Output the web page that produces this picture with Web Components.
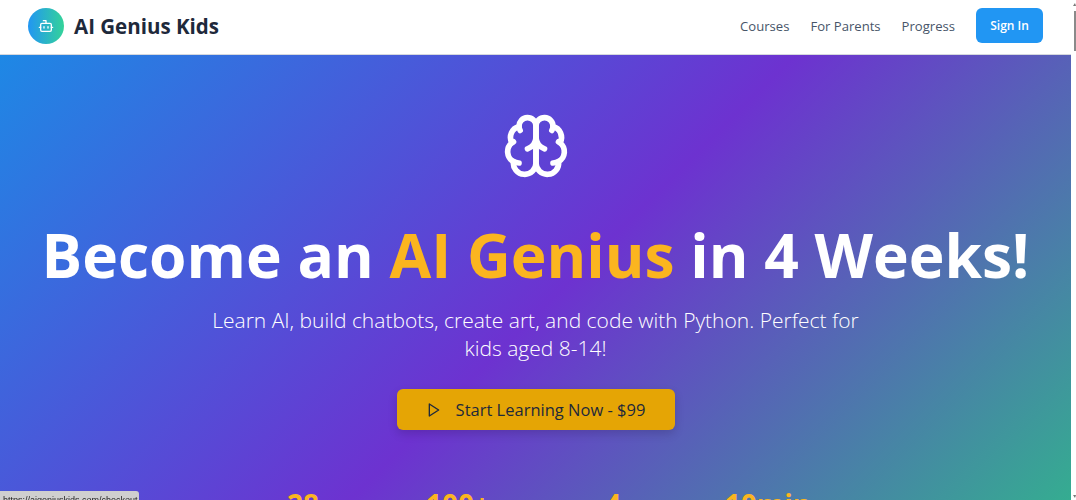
<!DOCTYPE html>
<html>
<head>
<meta charset="utf-8">
<title>AI Genius Kids</title>
<style>
    html, body { margin: 0; height: 100%; overflow: hidden; }
    body { font-family: "Open Sans", "Noto Sans", sans-serif; background: #fff; display: flex; }
    app-page { flex: 1; min-width: 0; }
</style>
</head>
<body>
<app-page>
    <top-nav></top-nav>
    <hero-section>
        <stat-item value="28"></stat-item>
        <stat-item value="100+"></stat-item>
        <stat-item value="4"></stat-item>
        <stat-item value="10min"></stat-item>
    </hero-section>
</app-page>
<fake-scrollbar></fake-scrollbar>
<status-tip>https://aigeniuskids.com/checkout</status-tip>

<script>
class AppPage extends HTMLElement {
    constructor() {
        super();
        this.attachShadow({ mode: 'open' });
        this.shadowRoot.innerHTML = `
            <style>
                :host { display: block; height: 500px; overflow: hidden; }
            </style>
            <slot></slot>
        `;
    }
}

class TopNav extends HTMLElement {
    constructor() {
        super();
        this.attachShadow({ mode: 'open' });
        this.shadowRoot.innerHTML = `
            <style>
                :host {
                    display: flex;
                    align-items: center;
                    justify-content: space-between;
                    height: 54px;
                    box-sizing: content-box;
                    padding: 0 28px;
                    background: #fff;
                    border-bottom: 1px solid #d5d8de;
                }
                .brand, .links { margin-bottom: 3px; }
                .brand { display: flex; align-items: center; gap: 10px; }
                .logo {
                    width: 36px;
                    height: 36px;
                    border-radius: 50%;
                    background: linear-gradient(90deg, #2196f3, #34d399);
                    display: flex;
                    align-items: center;
                    justify-content: center;
                }
                .logo svg { width: 16px; height: 16px; }
                .name { font-size: 20.5px; font-weight: 700; color: #1e293b; }
                .links { display: flex; align-items: center; gap: 21px; }
                a { font-size: 13.1px; color: #475569; text-decoration: none; }
                button {
                    font: 600 12px "Open Sans", sans-serif;
                    color: #fff;
                    background: #2196f3;
                    border: 0;
                    border-radius: 6px;
                    height: 35px;
                    width: 67px;
                    padding: 0;
                }
            </style>
            <div class="brand">
                <div class="logo">
                    <svg viewBox="0 0 24 24" fill="none" stroke="#fff" stroke-width="2" stroke-linecap="round" stroke-linejoin="round">
                        <path d="M12 8V4H8"/><rect x="4" y="8" width="16" height="12" rx="2"/><path d="M2 14h2"/><path d="M20 14h2"/><path d="M15 13v2"/><path d="M9 13v2"/>
                    </svg>
                </div>
                <span class="name">AI Genius Kids</span>
            </div>
            <div class="links">
                <a href="#">Courses</a>
                <a href="#">For Parents</a>
                <a href="#">Progress</a>
                <button>Sign In</button>
            </div>
        `;
    }
}

class HeroSection extends HTMLElement {
    constructor() {
        super();
        this.attachShadow({ mode: 'open' });
        this.shadowRoot.innerHTML = `
            <style>
                :host {
                    display: flex;
                    flex-direction: column;
                    align-items: center;
                    height: 520px;
                    padding-top: 57px;
                    box-sizing: border-box;
                    background: linear-gradient(135deg, #1e88e5 0%, #6d32d0 50%, #2fb98a 100%);
                    color: #fff;
                }
                .brain { width: 68px; height: 68px; display: block; }
                h1 {
                    margin: 39px 0 0;
                    font-size: 60.5px;
                    line-height: 72px;
                    font-weight: 700;
                    white-space: nowrap;
                }
                h1 span { color: #fbb51f; }
                p {
                    margin: 15px 0 0;
                    width: 660px;
                    font-size: 21px;
                    line-height: 28px;
                    font-weight: 300;
                    text-align: center;
                    color: #fff;
                }
                .cta {
                    margin-top: 27px;
                    width: 278px;
                    height: 41px;
                    display: flex;
                    align-items: center;
                    justify-content: center;
                    gap: 14px;
                    font: 400 16.5px "Open Sans", sans-serif;
                    color: #1e293b;
                    background: #e5a505;
                    border: 0;
                    border-radius: 6px;
                    box-shadow: 0 4px 10px rgba(0, 0, 0, 0.15);
                }
                .cta svg { width: 16px; height: 16px; }
                .stats {
                    margin-top: 56px;
                    display: grid;
                    grid-template-columns: repeat(4, 155px);
                }
            </style>
            <svg class="brain" viewBox="0 0 24 24" fill="none" stroke="#fff" stroke-width="2" stroke-linecap="round" stroke-linejoin="round">
                <path d="M12 5a3 3 0 1 0-5.997.125 4 4 0 0 0-2.526 5.77 4 4 0 0 0 .556 6.588A4 4 0 1 0 12 18Z"/>
                <path d="M12 5a3 3 0 1 1 5.997.125 4 4 0 0 1 2.526 5.77 4 4 0 0 1-.556 6.588A4 4 0 1 1 12 18Z"/>
                <path d="M15 13a4.5 4.5 0 0 1-3-4 4.5 4.5 0 0 1-3 4"/>
                <path d="M17.599 6.5a3 3 0 0 0 .399-1.375"/>
                <path d="M6.003 5.125A3 3 0 0 0 6.401 6.5"/>
                <path d="M3.477 10.896a4 4 0 0 1 .585-.396"/>
                <path d="M19.938 10.5a4 4 0 0 1 .585.396"/>
                <path d="M6 18a4 4 0 0 1-1.967-.516"/>
                <path d="M19.967 17.484A4 4 0 0 1 18 18"/>
            </svg>
            <h1>Become an <span>AI Genius</span> in 4 Weeks!</h1>
            <p>Learn AI, build chatbots, create art, and code with Python. Perfect for kids aged 8-14!</p>
            <button class="cta">
                <svg viewBox="0 0 24 24" fill="none" stroke="currentColor" stroke-width="2" stroke-linecap="round" stroke-linejoin="round">
                    <polygon points="5 3 19 12 5 21 5 3"/>
                </svg>
                Start Learning Now - $99
            </button>
            <div class="stats"><slot></slot></div>
        `;
    }
}

class StatItem extends HTMLElement {
    constructor() {
        super();
        this.attachShadow({ mode: 'open' });
        this.shadowRoot.innerHTML = `
            <style>
                :host { display: block; text-align: center; }
                div { font-size: 28px; line-height: 36px; font-weight: 700; color: #fbb51f; }
            </style>
            <div>${this.getAttribute('value')}</div>
        `;
    }
}

class FakeScrollbar extends HTMLElement {
    constructor() {
        super();
        this.attachShadow({ mode: 'open' });
        this.shadowRoot.innerHTML = `
            <style>
                :host {
                    display: flex;
                    flex-direction: column;
                    flex: none;
                    width: 5px;
                    height: 500px;
                    padding: 3px 0 2px;
                    box-sizing: border-box;
                    background: #fff;
                }
                .thumb { width: 2px; height: 40px; margin: 5px 0 0 3px; background: #8a8a8a; }
                .up, .down {
                    width: 0;
                    height: 0;
                    margin-left: 2px;
                    border-left: 2px solid transparent;
                    border-right: 1px solid transparent;
                }
                .up { border-bottom: 3px solid #777; }
                .down { border-top: 3px solid #777; margin-top: auto; }
            </style>
            <div class="up"></div>
            <div class="thumb"></div>
            <div class="down"></div>
        `;
    }
}

class StatusTip extends HTMLElement {
    constructor() {
        super();
        this.attachShadow({ mode: 'open' });
        this.shadowRoot.innerHTML = `
            <style>
                :host {
                    position: fixed;
                    left: 0;
                    top: 491px;
                    height: 18px;
                    width: 139px;
                    box-sizing: border-box;
                    padding: 2px 0 0 3px;
                    background: #cfcfcf;
                    border-top-right-radius: 3px;
                    font: 9px/14px "Liberation Sans", sans-serif;
                    color: #222;
                    overflow: hidden;
                    white-space: nowrap;
                }
            </style>
            <slot></slot>
        `;
    }
}

customElements.define('app-page', AppPage);
customElements.define('top-nav', TopNav);
customElements.define('hero-section', HeroSection);
customElements.define('stat-item', StatItem);
customElements.define('fake-scrollbar', FakeScrollbar);
customElements.define('status-tip', StatusTip);
</script>
</body>
</html>
